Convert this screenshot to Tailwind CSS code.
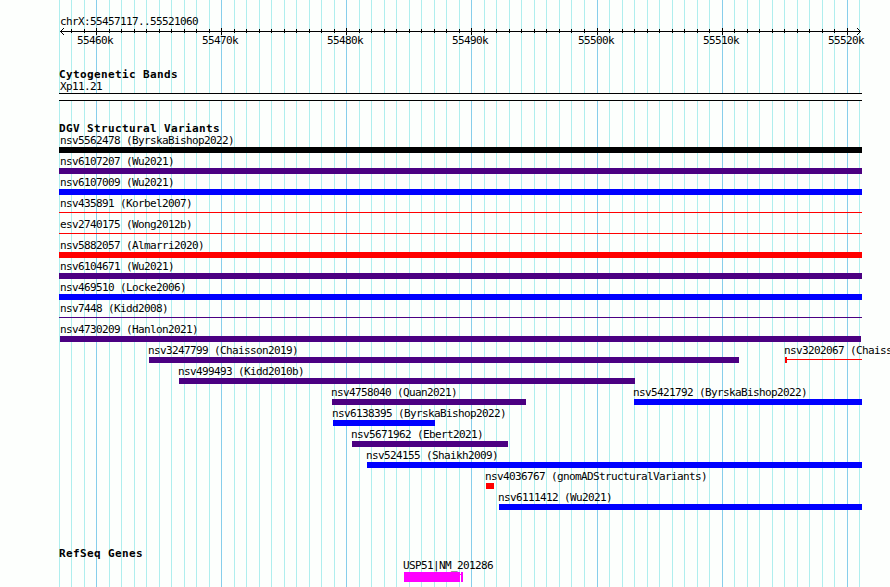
<!DOCTYPE html>
<html lang="en">
<head>
<meta charset="utf-8">
<title>chrX:55457117..55521060</title>
<script src="https://cdn.jsdelivr.net/npm/@tailwindcss/browser@4"></script>
</head>
<body class="w-[890px] h-[587px] overflow-hidden bg-[#fdfffd] text-black text-[11px] leading-[14px] tracking-[-0.622px] [font-family:'DejaVu_Sans_Mono',monospace] whitespace-nowrap">
<div class="relative isolate w-[890px] h-[587px] overflow-hidden flex flex-col">
<svg class="absolute inset-0 -z-10" width="890" height="587" shape-rendering="crispEdges"><g id="grid"></g></svg>
<header class="h-[67px] pt-[15px]">
<div class="h-[12px] pl-[60px]">chrX:55457117..55521060</div>
<svg class="block" width="890" height="8" shape-rendering="crispEdges"><path d="M60 4.5H861M63.5 1v1M62.5 2v1M61.5 3v1M60.5 4v1M61.5 5v1M62.5 6v1M63.5 7v1M857.5 1v1M858.5 2v1M859.5 3v1M860.5 4v1M859.5 5v1M858.5 6v1M857.5 7v1" stroke="#000"/><g id="ticks"></g></svg>
<div class="flex h-[12px] -mt-px pl-[77px]"><span class="w-[125px]">55460k</span><span class="w-[125px]">55470k</span><span class="w-[125px]">55480k</span><span class="w-[126px]">55490k</span><span class="w-[125px]">55500k</span><span class="w-[125px]">55510k</span><span>55520k</span></div>
</header>
<section class="h-[55px] pt-px">
<h2 class="h-[12px] pl-[59px] font-bold tracking-[0.378px]">Cytogenetic Bands</h2>
<div class="h-[13px] pl-[60px]">Xp11.21</div>
<div class="ml-[59px] w-[803px] h-[8px] border-y border-black bg-[#fdfffd]"></div>
</section>
<section class="h-[425px]">
<h2 class="h-[12px] pl-[59px] font-bold tracking-[0.378px]">DGV Structural Variants</h2>
<div id="variants"></div>
</section>
<section>
<h2 class="h-[12px] pl-[59px] font-bold tracking-[0.378px]">RefSeq Genes</h2>
<div class="h-[13px] pl-[403px]">USP51|NM_201286</div>
<svg class="block ml-[404px]" width="59" height="10" shape-rendering="crispEdges"><path d="M0 0H56V10H0ZM57 0H59V10H57ZM56 2h1v1h-1Z" fill="#f0f"/></svg>
</section>
</div>
<script>
const xs=[59,71,84,96,109,121,134,146,159,171,184,196,209,221,234,246,259,271,284,296,309,321,334,346,359,371,384,396,409,421,434,446,459,471,484,496,509,521,534,546,559,571,584,597,609,622,634,647,659,672,684,697,709,722,734,747,759,772,784,797,809,822,834,847,859];
const majors=[96,221,346,471,597,722,847];
document.getElementById('grid').innerHTML=xs.map(x=>`<rect x="${x}" width="1" height="587" fill="${majors.includes(x)?'#87ceeb':'#afeeee'}"/>`).join('');
document.getElementById('ticks').innerHTML=xs.slice(1,-1).map(x=>majors.includes(x)?`<rect x="${x}" y="1" width="1" height="7"/>`:`<rect x="${x}" y="2" width="1" height="4"/>`).join('');
const K='#000',P='#4b0082',B='#00f',R='#f00';
// rows of [name, label x, bar start, bar end, colour, shape]
const rows=[
[['nsv5562478 (ByrskaBishop2022)',60,59,862,K]],
[['nsv6107207 (Wu2021)',60,59,862,P]],
[['nsv6107009 (Wu2021)',60,59,862,B]],
[['nsv435891 (Korbel2007)',60,59,862,R,'thin']],
[['esv2740175 (Wong2012b)',60,59,862,R,'thin']],
[['nsv5882057 (Almarri2020)',60,59,862,R]],
[['nsv6104671 (Wu2021)',60,59,862,P]],
[['nsv469510 (Locke2006)',60,59,862,B]],
[['nsv7448 (Kidd2008)',60,59,862,P,'thin']],
[['nsv4730209 (Hanlon2021)',60,60,861,P]],
[['nsv3247799 (Chaisson2019)',148,149,739,P],['nsv3202067 (Chaisson2019)',784,785,862,R,'open']],
[['nsv499493 (Kidd2010b)',178,179,635,P]],
[['nsv4758040 (Quan2021)',331,332,526,P],['nsv5421792 (ByrskaBishop2022)',633,634,862,B]],
[['nsv6138395 (ByrskaBishop2022)',332,333,435,B]],
[['nsv5671962 (Ebert2021)',351,352,508,P]],
[['nsv524155 (Shaikh2009)',366,367,862,B]],
[['nsv4036767 (gnomADStructuralVariants)',485,486,494,R]],
[['nsv6111412 (Wu2021)',498,499,862,B]]];
document.getElementById('variants').innerHTML=rows.map(r=>`<div class="grid h-[21px]">${r.map(([n,l,a,b,c,s])=>`<div class="col-start-1 row-start-1"><div class="h-[13px]" style="padding-left:${l}px">${n}</div><svg class="block" width="890" height="6" shape-rendering="crispEdges" fill="${c}">${s?`<rect x="${a}" y="2" width="${b-a}" height="1"/>`:`<rect x="${a}" width="${b-a}" height="6"/>`}${s==='open'?`<rect x="${a}" width="2" height="6"/>`:''}</svg></div>`).join('')}</div>`).join('');
</script>
</body>
</html>
